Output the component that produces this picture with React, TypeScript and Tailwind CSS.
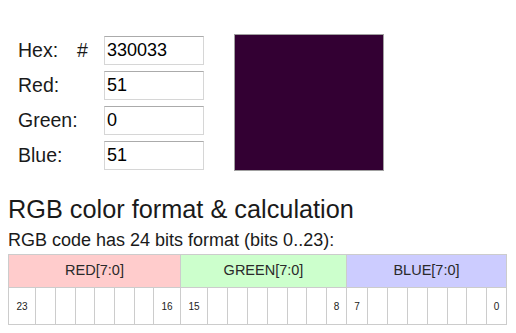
import { Fragment } from "react";

const fields = [
  { label: "Hex:", hash: true, value: "330033" },
  { label: "Red:", hash: false, value: "51" },
  { label: "Green:", hash: false, value: "0" },
  { label: "Blue:", hash: false, value: "51" },
];

// bit cell widths, border to border
const widths = [28, 20, 20, 19, 20, 20, 19, 27, 27, 20, 20, 20, 20, 19, 20, 20, 21, 20, 20, 20, 20, 19, 20, 20];
const bitLabels: Record<number, string> = { 0: "23", 7: "16", 8: "15", 15: "8", 16: "7", 23: "0" };

export default function App() {
  return (
    <div className="min-h-screen bg-white px-2 font-['Liberation_Sans',Arial,sans-serif] text-[#1a1a1a]">
      <div className="flex pt-[34px]">
        <div className="ml-[10px] mt-[2px] grid grid-cols-[59px_27px_100px] gap-y-[6px] items-center self-start">
          {fields.map((f) => (
            <Fragment key={f.label}>
              <span className="text-[19.5px] leading-[29px]">{f.label}</span>
              <span className="text-[19.5px] leading-[29px]">{f.hash ? "#" : ""}</span>
              <input
                defaultValue={f.value}
                className="h-[29px] w-[100px] border border-[#d6d6d6] border-t-[#ababab] bg-white pl-[2px] text-[18px] text-black outline-none"
              />
            </Fragment>
          ))}
        </div>
        <div className="ml-[30px] h-[137px] w-[150px] border border-[#a0a0a0] bg-[#330033]" />
      </div>

      <h2 className="mt-[24px] text-[25.3px] leading-[28px] font-normal">RGB color format &amp; calculation</h2>
      <p className="mt-[7px] text-[18px] leading-[20px]">RGB code has 24 bits format (bits 0..23):</p>

      <div className="mt-[4px] grid w-fit grid-cols-[27px_20px_20px_19px_20px_20px_19px_27px_27px_20px_20px_20px_20px_19px_20px_20px_21px_20px_20px_20px_20px_19px_20px_20px] border-l border-t border-[#cccccc] text-[#2a2a2a]">
        <div className="col-span-8 flex h-[33px] items-center justify-center border-b border-r border-[#cccccc] bg-[#ffcccc] text-[14.5px]">RED[7:0]</div>
        <div className="col-span-8 flex h-[33px] items-center justify-center border-b border-r border-[#cccccc] bg-[#ccffcc] text-[14.5px]">GREEN[7:0]</div>
        <div className="col-span-8 flex h-[33px] items-center justify-center border-b border-r border-[#cccccc] bg-[#ccccff] text-[14.5px]">BLUE[7:0]</div>
        {widths.map((_, i) => (
          <div key={i} className="flex h-[37px] items-center justify-center border-b border-r border-[#cccccc] text-[10px] text-[#222]">
            {bitLabels[i] ?? ""}
          </div>
        ))}
      </div>
    </div>
  );
}
